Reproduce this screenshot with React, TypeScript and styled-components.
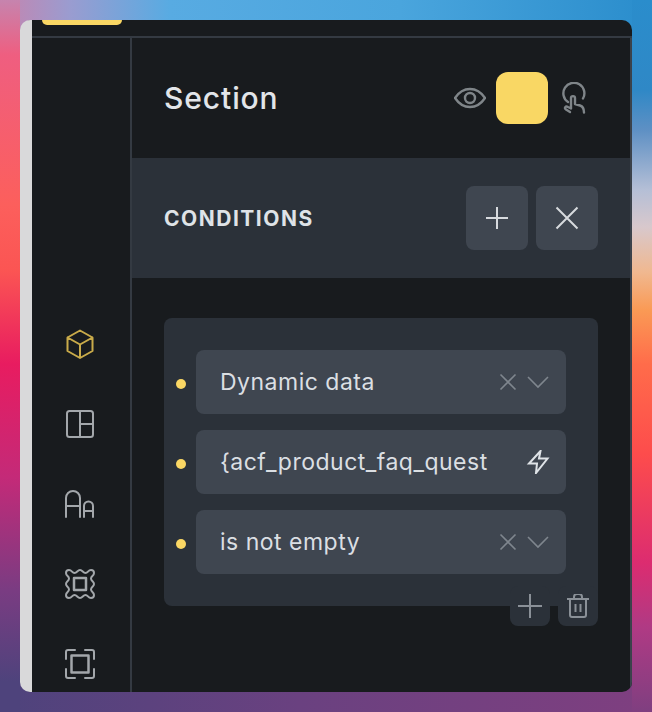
import { createGlobalStyle, styled } from 'styled-components';

const GlobalStyle = createGlobalStyle`
  html, body {
    margin: 0;
    height: 100%;
    overflow: hidden;
  }
  body {
    font-family: Inter, "Noto Sans", sans-serif;
  }
`;

const Page = styled.div`
  width: 652px;
  height: 712px;
  box-sizing: border-box;
  padding: 20px;
  background:
    linear-gradient(180deg, #c684ae 0, #ef5e80 55px, #fc5f5c 205px, #fb5553 270px, #e81c60 364px, #c42a78 477px, #7a3c82 590px, #4e437c 682px) left / 20px 100% no-repeat,
    linear-gradient(180deg, #2a8dcc 0, #2f88c6 90px, #5e90c4 130px, #b5bfd6 190px, #d8c8cc 227px, #f0b890 272px, #fa9a55 310px, #ff6c4a 364px, #fd4c4c 454px, #dc2c70 563px, #b03a84 627px, #7f3f80 712px) right / 20px 100% no-repeat,
    linear-gradient(90deg, #c684ae 0, #9a9cd0 70px, #58abe2 170px, #4aa5dd 400px, #2a8dcc 652px) top / 100% 32px no-repeat,
    linear-gradient(90deg, #4e437c 0, #6a4180 300px, #7f3f80 652px) bottom / 100% 32px no-repeat;
`;

const Window = styled.div`
  height: 672px;
  border-radius: 10px;
  overflow: hidden;
  display: flex;
  flex-direction: column;
  background: #181b1e;
  border-left: 12px solid #d9d9da;
  box-sizing: border-box;
`;

const TopBar = styled.div`
  height: 18px;
  flex: none;
  box-sizing: border-box;
  padding-left: 10px;
  border-bottom: 2px solid #343a42;
`;

const ActiveTab = styled.div`
  width: 80px;
  height: 5px;
  background: #fad764;
  border-radius: 0 0 8px 8px;
`;

const Main = styled.div`
  flex: 1;
  display: flex;
  min-height: 0;
  border-right: 2px solid #3b424b;
`;

const Rail = styled.nav`
  width: 100px;
  flex: none;
  box-sizing: border-box;
  padding: 290px 2px 0 0;
  display: flex;
  flex-direction: column;
  align-items: center;
  gap: 48px;
  border-right: 2px solid #343a42;
`;

const RailIcon = styled.svg<{ $active?: boolean }>`
  width: 32px;
  height: 32px;
  flex: none;
  fill: none;
  stroke: ${(p) => (p.$active ? '#c9ab4a' : '#a3a7ab')};
  stroke-width: 2;
  stroke-linejoin: round;
  stroke-linecap: round;
`;

const Panel = styled.div`
  flex: 1;
  min-width: 0;
  display: flex;
  flex-direction: column;
`;

const Header = styled.header`
  height: 120px;
  flex: none;
  box-sizing: border-box;
  padding: 0 40px 0 32px;
  display: flex;
  align-items: center;
  justify-content: space-between;
`;

const Title = styled.h1`
  margin: 0;
  font-size: 30px;
  font-weight: 500;
  letter-spacing: 0.9px;
  color: #e2e5e9;
`;

const HeaderActions = styled.div`
  display: flex;
  align-items: center;
`;

const StateIcon = styled.svg`
  width: 32px;
  height: 32px;
  fill: none;
  stroke: #7f8589;
  stroke-width: 2.4;
  stroke-linecap: round;
  stroke-linejoin: round;
`;

const Swatch = styled.div`
  width: 52px;
  height: 52px;
  margin: 0 10px;
  background: #f9d764;
  border-radius: 12px;
`;

const ConditionsBar = styled.div`
  height: 120px;
  flex: none;
  box-sizing: border-box;
  padding: 0 32px;
  display: flex;
  align-items: center;
  justify-content: space-between;
  background: #2b3139;
`;

const BarTitle = styled.h2`
  margin: 0;
  font-size: 21px;
  font-weight: 700;
  letter-spacing: 1.5px;
  color: #dfe3e7;
`;

const BarActions = styled.div`
  display: flex;
  gap: 8px;
`;

const BarButton = styled.button`
  width: 62px;
  height: 64px;
  padding: 0;
  border: 0;
  border-radius: 8px;
  background: #3f4650;
  display: flex;
  align-items: center;
  justify-content: center;
`;

const LineIcon = styled.svg<{ $size: number; $color: string; $weight?: number }>`
  width: ${(p) => p.$size}px;
  height: ${(p) => p.$size}px;
  flex: none;
  fill: none;
  stroke: ${(p) => p.$color};
  stroke-width: ${(p) => p.$weight ?? 2};
  stroke-linecap: butt;
  stroke-linejoin: miter;
`;

const Body = styled.div`
  padding: 40px 32px;
`;

const ConditionCard = styled.div`
  position: relative;
  box-sizing: border-box;
  width: 434px;
  height: 288px;
  padding: 32px 32px 0 12px;
  display: flex;
  flex-direction: column;
  gap: 16px;
  background: #2b3139;
  border-radius: 8px;
`;

const FieldRow = styled.div`
  display: flex;
  align-items: center;
  gap: 10px;
`;

const Dot = styled.span`
  width: 10px;
  height: 10px;
  margin-top: 4px;
  flex: none;
  border-radius: 50%;
  background: #fad764;
`;

const Field = styled.div`
  flex: 1;
  height: 64px;
  box-sizing: border-box;
  padding: 0 16px 0 24px;
  display: flex;
  align-items: center;
  background: #3f4650;
  border-radius: 8px;
`;

const FieldText = styled.span`
  flex: 1;
  font-size: 23px;
  letter-spacing: 0.5px;
  color: #dbdfe3;
  white-space: nowrap;
  overflow: hidden;
`;

const FieldIcons = styled.div`
  display: flex;
  align-items: center;
  gap: 8px;
`;

const CardActions = styled.div`
  position: absolute;
  right: 0;
  bottom: -20px;
  display: flex;
  gap: 8px;
`;

const CardButton = styled.button`
  width: 40px;
  height: 40px;
  padding: 0;
  border: 0;
  border-radius: 8px;
  background: #2b3139;
  display: flex;
  align-items: center;
  justify-content: center;
`;

function ClearIcon() {
  return (
    <LineIcon $size={20} $color="#7f868e" $weight={1.6} viewBox="0 0 20 20">
      <path d="M2.5 2.500l15 15M17.500 2.500l-15 15" />
    </LineIcon>
  );
}

function ChevronIcon() {
  return (
    <LineIcon $size={24} $color="#7f868e" $weight={1.6} viewBox="0 0 24 24">
      <path d="M2 7l10 10L22 7" />
    </LineIcon>
  );
}

function SelectIcons() {
  return (
    <FieldIcons>
      <ClearIcon />
      <ChevronIcon />
    </FieldIcons>
  );
}

export default function App() {
  return (
    <Page>
      <GlobalStyle />
      <Window>
        <TopBar>
          <ActiveTab />
        </TopBar>
        <Main>
          <Rail>
            <RailIcon $active viewBox="0 0 32 32">
              <path d="M16 2.500l12.500 7v13.500L16 30 3.500 23V9.500zM3.500 9.500L16 16.500l12.500-7M16 16.500V30" />
            </RailIcon>
            <RailIcon viewBox="0 0 32 32">
              <rect x="3" y="3" width="26" height="26" rx="2.5" />
              <path d="M16 3v26M16 16h13" />
            </RailIcon>
            <RailIcon viewBox="0 0 32 32">
              <path d="M2 29V10a7 7 0 0 1 14 0v19M2 18h14M20 29V18a4.500 4.500 0 0 1 9 0v11M20 23h9" />
            </RailIcon>
            <RailIcon viewBox="0 0 32 32">
              <rect x="10" y="10" width="12" height="12" strokeWidth="2.5" />
              <path d="M5 2C8 2 8 5 10.500 5S13.500 2 16 2s3 3 5.500 3S24 2 27 2c2 0 3 1 3 3 0 3-3 3-3 5.500S30 13.500 30 16s-3 3-3 5.500S30 24 30 27c0 2-1 3-3 3-3 0-3-3-5.500-3S18.500 30 16 30s-3-3-5.500-3S8 30 5 30c-2 0-3-1-3-3 0-3 3-3 3-5.500S2 18.500 2 16s3-3 3-5.500S2 8 2 5c0-2 1-3 3-3z" />
            </RailIcon>
            <RailIcon viewBox="0 0 32 32">
              <rect x="7.5" y="7.5" width="17" height="17" strokeWidth="2.5" />
              <path d="M2 11V4a2 2 0 0 1 2-2h7M21 2h7a2 2 0 0 1 2 2v7M30 21v7a2 2 0 0 1-2 2h-7M11 30H4a2 2 0 0 1-2-2v-7" />
            </RailIcon>
          </Rail>
          <Panel>
            <Header>
              <Title>Section</Title>
              <HeaderActions>
                <StateIcon viewBox="0 0 32 32">
                  <path d="M1 16c4-6 9-9 15-9s11 3 15 9c-4 6-9 9-15 9S5 22 1 16z" />
                  <circle cx="16" cy="16" r="5" />
                </StateIcon>
                <Swatch />
                <StateIcon viewBox="0 0 32 32">
                  <path d="M10 20A10.500 10.500 0 1 1 25 16.500" />
                  <path d="M12 30l-4-2.500c-2-1.500-.5-4 2-2.500l3 1.500V16c0-2.500 4-2.500 4 0v6l5 1.500c3 1 4 3 4 7" />
                </StateIcon>
              </HeaderActions>
            </Header>
            <ConditionsBar>
              <BarTitle>CONDITIONS</BarTitle>
              <BarActions>
                <BarButton>
                  <LineIcon $size={24} $color="#d7dade" viewBox="0 0 24 24">
                    <path d="M12 1v22M1 12h22" />
                  </LineIcon>
                </BarButton>
                <BarButton>
                  <LineIcon $size={24} $color="#d7dade" viewBox="0 0 24 24">
                    <path d="M1.500 1.500l21 21M22.500 1.500l-21 21" />
                  </LineIcon>
                </BarButton>
              </BarActions>
            </ConditionsBar>
            <Body>
              <ConditionCard>
                <FieldRow>
                  <Dot />
                  <Field>
                    <FieldText>Dynamic data</FieldText>
                    <SelectIcons />
                  </Field>
                </FieldRow>
                <FieldRow>
                  <Dot />
                  <Field>
                    <FieldText>{'{acf_product_faq_quest'}</FieldText>
                    <LineIcon $size={24} $color="#dfe3e7" viewBox="0 0 24 24">
                      <path d="M14.500 1L3 13.500h8L10 23 21.500 8.500H13z" />
                    </LineIcon>
                  </Field>
                </FieldRow>
                <FieldRow>
                  <Dot />
                  <Field>
                    <FieldText>is not empty</FieldText>
                    <SelectIcons />
                  </Field>
                </FieldRow>
                <CardActions>
                  <CardButton>
                    <LineIcon $size={24} $color="#8a9097" viewBox="0 0 24 24">
                      <path d="M12 0v24M0 12h24" />
                    </LineIcon>
                  </CardButton>
                  <CardButton>
                    <LineIcon $size={24} $color="#8a9097" viewBox="0 0 24 24">
                      <path d="M1 5h22M4 5v16a2 2 0 0 0 2 2h12a2 2 0 0 0 2-2V5M8 5V3a3 3 0 0 1 3-3h2a3 3 0 0 1 3 3v2M9.500 10v8M14.500 10v8" />
                    </LineIcon>
                  </CardButton>
                </CardActions>
              </ConditionCard>
            </Body>
          </Panel>
        </Main>
      </Window>
    </Page>
  );
}
